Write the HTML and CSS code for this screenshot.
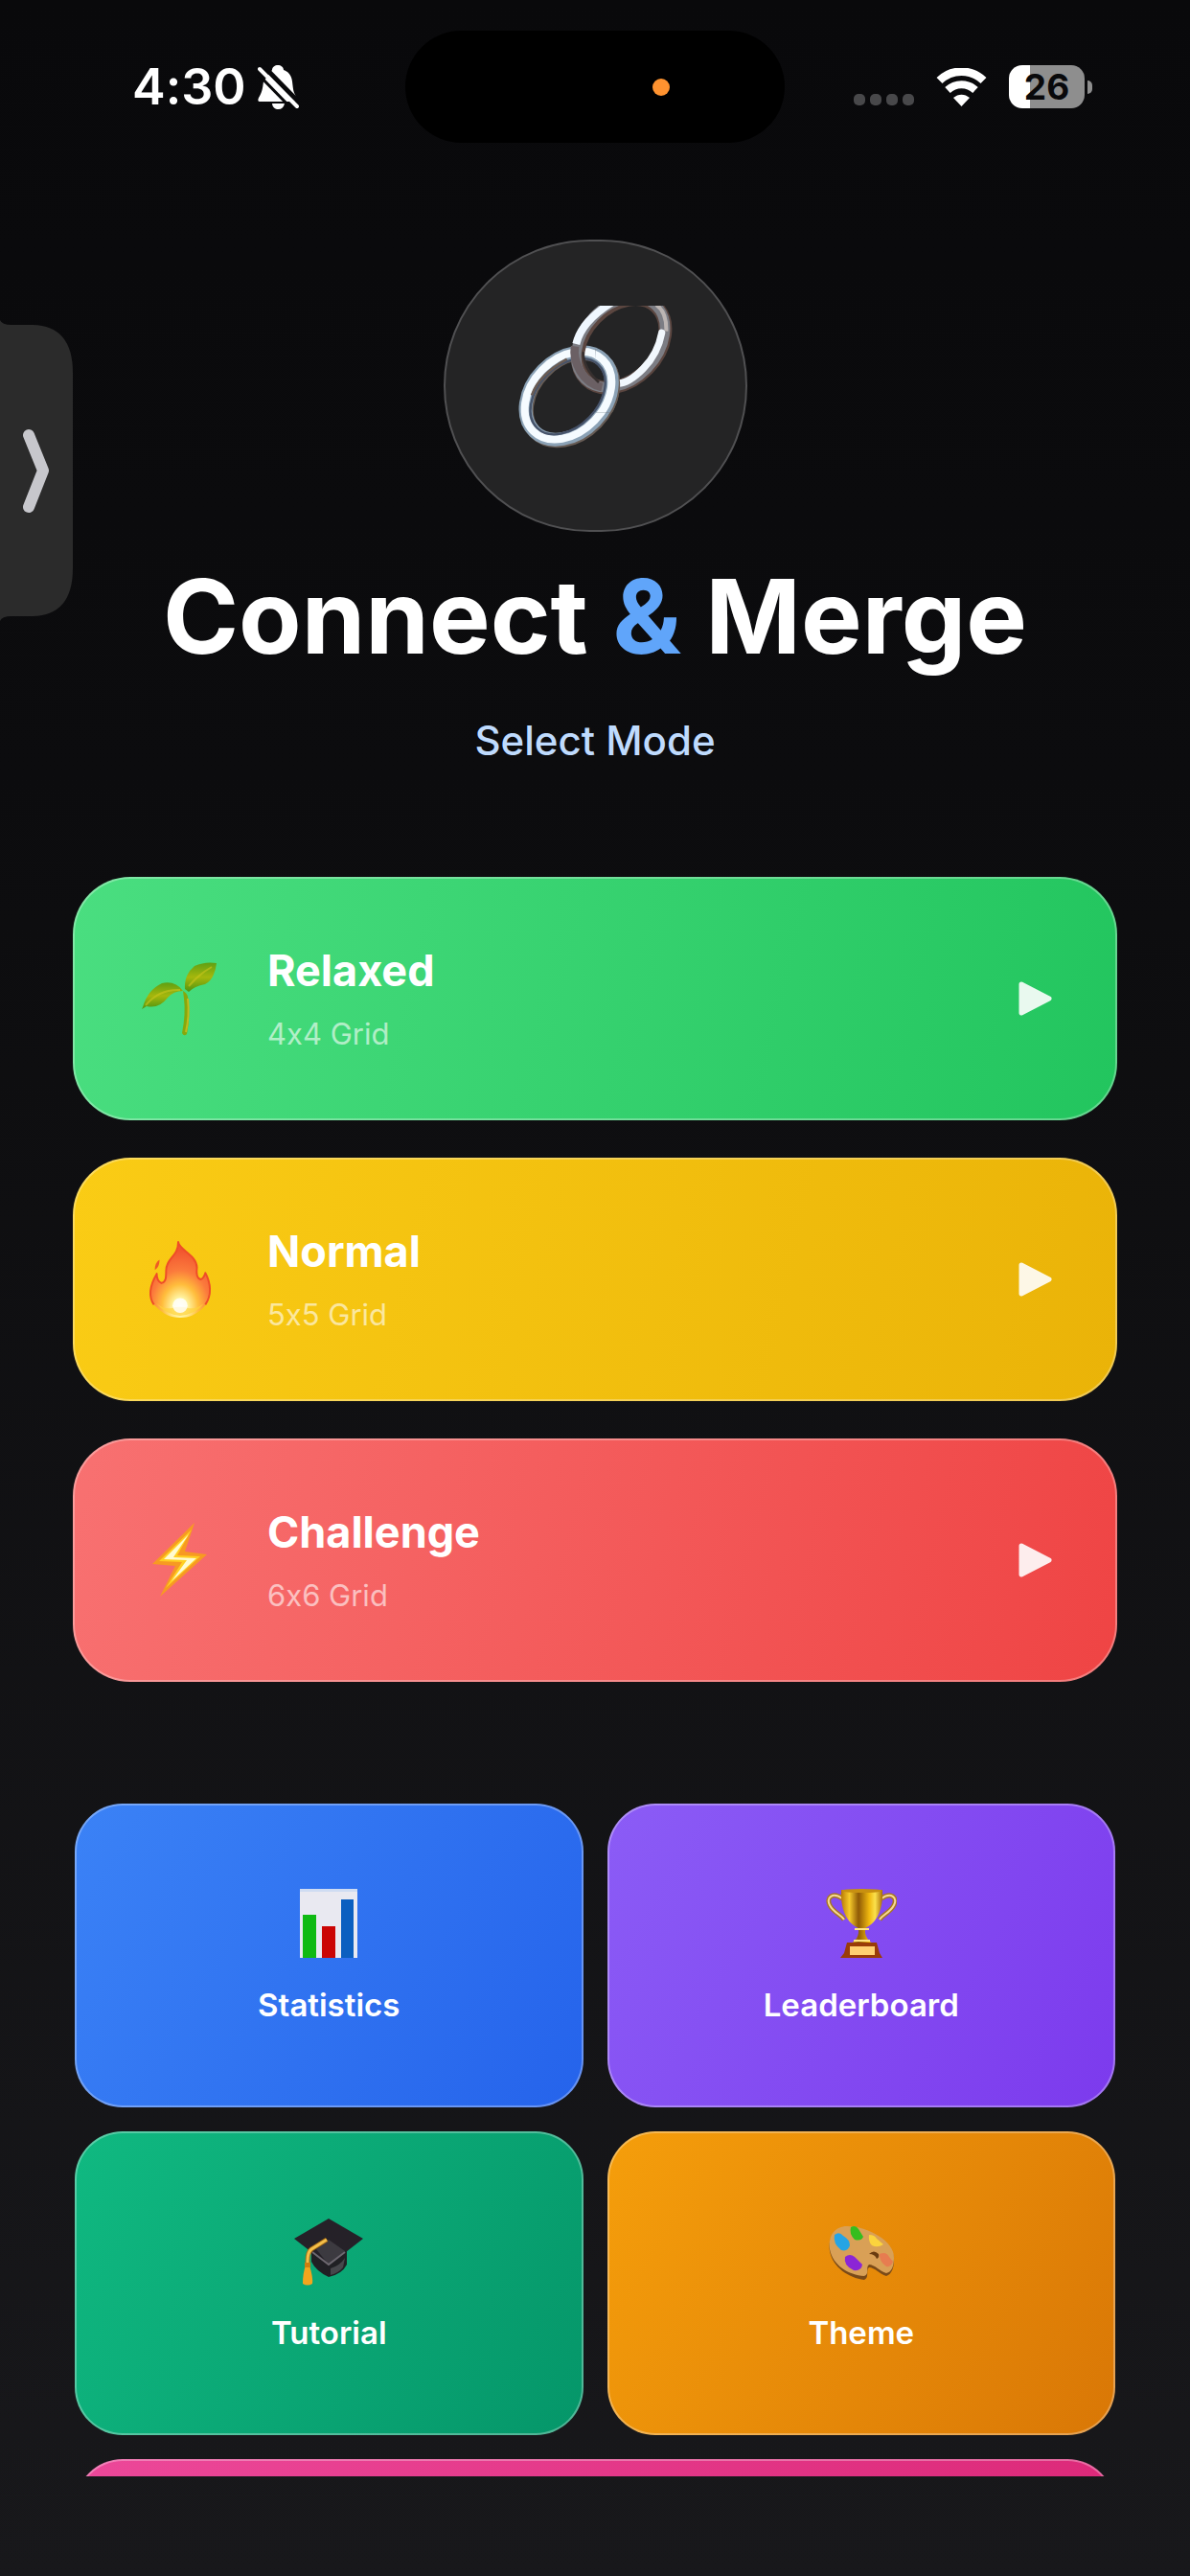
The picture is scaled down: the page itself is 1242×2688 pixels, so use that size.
FILE: index.html
```html
<!DOCTYPE html>
<html lang="en">
<head>
<meta charset="utf-8">
<meta name="viewport" content="width=device-width, initial-scale=1">
<title>Connect &amp; Merge</title>
<link rel="stylesheet" href="styles.css">
</head>
<body>
<div class="app">
  <div class="status">
    <div class="status-left">
      <span class="time">4:30</span>
      <svg class="bell" viewBox="0 0 43 46" aria-hidden="true">
        <path d="M21 0c-3 0-6 2-6 5L6 17c-1 9-2 12-5 17-1 2-1 4 1 4h38c2 0 2-2 1-4-4-5-4-9-5-17-1-7-4-10-9-12 0-3-3-5-6-5z" fill="#fff"/>
        <path d="M15 40h13c-1 4-3 6-6.500 6s-6-2-6.500-6z" fill="#fff"/>
        <path d="M5 0L46 42" stroke="#09090b" stroke-width="5" />
        <path d="M-4 0h12L-4 20z" fill="#09090b"/>
        <path d="M2 4L41 43" stroke="#fff" stroke-width="4" stroke-linecap="round"/>
        <path d="M0 9L36 46" stroke="#09090b" stroke-width="3"/>
      </svg>
    </div>
    <div class="island"><span class="mic-dot"></span></div>
    <div class="status-right">
      <span class="signal"><i></i><i></i><i></i><i></i></span>
      <svg class="wifi" viewBox="0 0 53 40" fill="none" stroke="#fff" aria-hidden="true">
        <path d="M3.500 13a33 33 0 0 1 46 0" stroke-width="8.500"/>
        <path d="M12 23a21 21 0 0 1 29 0" stroke-width="8"/>
        <path d="M26.500 40L18 31c5-4.500 12-4.500 17 0z" fill="#fff" stroke="none"/>
      </svg>
      <span class="battery"><span class="battery-level">26</span><span class="battery-cap"></span></span>
    </div>
  </div>

  <button class="drawer" aria-label="Open side panel">
    <svg viewBox="0 0 76 314" aria-hidden="true">
      <path d="M0 0q2 5 12 5h22q42 1 42 50v204q0 49-42 50H12q-10 0-12 5z" fill="#2b2b2b"/>
      <path d="M30 120l15 37-15 38" fill="none" stroke="#c7c7cc" stroke-width="12" stroke-linecap="round" stroke-linejoin="round"/>
    </svg>
  </button>

  <main class="content">
    <header class="hero">
      <div class="logo">
        <svg viewBox="300 265 486 447" aria-hidden="true">
          <defs>
            <clipPath id="over"><path d="M545 400L660 420V600H540V480z"/></clipPath>
            <g id="ring-low">
              <ellipse cx="465" cy="552" rx="155" ry="114" transform="rotate(-46 465 552)" stroke="#675c55" stroke-width="42"/>
              <ellipse cx="461" cy="547" rx="155" ry="114" transform="rotate(-46 461 547)" stroke="#8ba2b6" stroke-width="42"/>
              <ellipse cx="459" cy="546" rx="156" ry="114" transform="rotate(-46 459 546)" stroke="#f5fbff" stroke-width="24"/>
              <ellipse cx="458" cy="549" rx="138" ry="94" transform="rotate(-46 458 549)" stroke="#46536a" stroke-width="7"/>
            </g>
          </defs>
          <g fill="none">
            <use href="#ring-low"/>
            <path d="M345 545Q368 480 455 432" stroke="#6a5c54" stroke-width="8"/>
            <ellipse cx="626" cy="383" rx="158" ry="114" transform="rotate(-46 626 383)" stroke="#5b4640" stroke-width="42"/>
            <ellipse cx="623" cy="380" rx="160" ry="116" transform="rotate(-46 623 380)" stroke="#7c7d84" stroke-width="32"/>
            <path d="M484 385Q500 315 595 255" stroke="#eff7ff" stroke-width="24"/>
            <path d="M480 392Q474 430 497 470T565 520" stroke="#6b6064" stroke-width="26"/>
            <path d="M735 262Q768 285 766 345" stroke="#bcb5b3" stroke-width="12"/>
            <path d="M752 350Q740 415 694 462T615 508" stroke="#f1f7fd" stroke-width="22" stroke-linecap="round"/>
            <path d="M506 410Q505 460 555 505" stroke="#37302f" stroke-width="8"/>
            <g clip-path="url(#over)"><use href="#ring-low"/></g>
          </g>
        </svg>
      </div>
      <h1>Connect <span class="amp">&amp;</span> Merge</h1>
      <p class="subtitle">Select Mode</p>
    </header>

    <section class="modes" aria-label="Game modes">
      <button class="mode relaxed">
        <svg class="mode-icon" viewBox="0 0 80 80" aria-hidden="true">
          <defs><linearGradient id="leaf" x1="0" y1="0" x2="0" y2="1"><stop offset="0" stop-color="#5f9f12"/><stop offset=".5" stop-color="#a5b70c"/><stop offset="1" stop-color="#4e9410"/></linearGradient></defs>
          <path d="M44 32q4 2 5 6 3 20-1 39-3 3-5-1 4-20 2-36z" fill="#86a80c"/>
          <path d="M49 40q2 18-2 35" stroke="#c3b91a" stroke-width="2" fill="none"/>
          <path d="M2 49q5-18 20-25 14-3 22 8-10 0-16 7-9 12-22 9l-5 3z" fill="url(#leaf)"/>
          <path d="M46 30q-1-15 10-24 11-5 23-3-2 17-12 22-11 2-17 8z" fill="url(#leaf)"/>
          <path d="M5 47q14-17 36-16M50 27Q60 15 74 7" stroke="#c9c51c" stroke-width="2" fill="none" opacity=".6"/>
        </svg>
        <span class="mode-text"><span class="mode-title">Relaxed</span><span class="mode-grid">4x4 Grid</span></span>
        <svg class="play" viewBox="0 0 36 36" aria-hidden="true"><path d="M4 3l29 15L4 33z" fill="#fff" stroke="#fff" stroke-width="5" stroke-linejoin="round"/></svg>
      </button>
      <button class="mode normal">
        <svg class="mode-icon" viewBox="0 0 80 82" aria-hidden="true">
          <defs><radialGradient id="flame" cx=".5" cy=".86" r=".75"><stop offset="0" stop-color="#fffef0"/><stop offset=".17" stop-color="#fff3a0"/><stop offset=".4" stop-color="#ffbd3c"/><stop offset=".65" stop-color="#fb7a3c"/><stop offset="1" stop-color="#f2552f"/></radialGradient></defs>
          <path d="M39 1c1 9 19 13 20 27-1 8 0 12 4 13 3-1 4-3 5-7 7 12 8 27-3 38-8 7-14 10-24 10s-18-4-25-11C5 61 8 47 16 35c0 5 1 8 5 10 5-1 5-6 5-13 0-14 13-15 13-31z" fill="url(#flame)"/>
          <path d="M13 68C6 58 9 47 16 35c0 5 1 8 5 10 5-1 5-6 5-13 0-14 13-15 13-31 1 9 19 13 20 27-1 8 0 12 4 13 3-1 4-3 5-7 6 11 7 24 0 34" fill="none" stroke="#ee4d28" stroke-width="2" stroke-linejoin="round"/>
          <path d="M19 20q-5 3-5 11 5-3 5-11z" fill="#ee5b24"/>
          <path d="M15 66q10 12 26 14 17-2 26-14-8 7-16 6-10-3-20 0-8 1-16-6z" fill="#ffd33c" opacity=".7"/>
          <circle cx="41" cy="69" r="8" fill="#fff" opacity=".8"/>
        </svg>
        <span class="mode-text"><span class="mode-title">Normal</span><span class="mode-grid">5x5 Grid</span></span>
        <svg class="play" viewBox="0 0 36 36" aria-hidden="true"><path d="M4 3l29 15L4 33z" fill="#fff" stroke="#fff" stroke-width="5" stroke-linejoin="round"/></svg>
      </button>
      <button class="mode challenge">
        <svg class="mode-icon" viewBox="0 0 80 80" aria-hidden="true">
          <path d="M56 1L12 44l24 2-16 32 49-44-23-3z" fill="#f79a22"/>
          <path d="M53 8L19 41l24 1-17 27 36-33-24-1z" fill="#ffcf21"/>
          <path d="M50 13L24 39l24 1-16 22 26-24-24-1z" fill="#fffbd0"/>
        </svg>
        <span class="mode-text"><span class="mode-title">Challenge</span><span class="mode-grid">6x6 Grid</span></span>
        <svg class="play" viewBox="0 0 36 36" aria-hidden="true"><path d="M4 3l29 15L4 33z" fill="#fff" stroke="#fff" stroke-width="5" stroke-linejoin="round"/></svg>
      </button>
    </section>

    <nav class="tiles" aria-label="Menu">
      <button class="tile statistics">
        <svg class="tile-icon" viewBox="0 0 74 74" aria-hidden="true">
          <path d="M7 1h60v72H7z" fill="#e9e9f1"/><path d="M7 1h60v3H7z" fill="#cfdcf2"/>
          <path d="M10 28h14v45H10z" fill="#0fba13"/><path d="M30 40h14v33H30z" fill="#cb0505"/><path d="M50 12h13v61H50z" fill="#0b5fc0"/>
        </svg>
        <span>Statistics</span>
      </button>
      <button class="tile leaderboard">
        <svg class="tile-icon" viewBox="0 0 74 74" aria-hidden="true">
          <defs><linearGradient id="gold" x1="0" x2="1"><stop offset="0" stop-color="#b97a05"/><stop offset=".2" stop-color="#f6cb2a"/><stop offset=".42" stop-color="#8f5a06"/><stop offset=".68" stop-color="#f0b90f"/><stop offset=".82" stop-color="#fbe14c"/><stop offset="1" stop-color="#a86c06"/></linearGradient></defs>
          <g fill="none"><path d="M17 11C7 4 0 10 4 18s11 9 15 15M58 11c10-7 17-1 13 7s-11 9-15 15" stroke="#a77622" stroke-width="5"/><path d="M17 11C7 4 0 10 4 18s11 9 15 15M58 11c10-7 17-1 13 7s-11 9-15 15" stroke="#f6d994" stroke-width="2"/></g>
          <path d="M16 2h43c1 19-5 34-18 40v5q1 7 8 11H26q7-4 8-11v-5C21 36 15 21 16 2z" fill="url(#gold)"/>
          <ellipse cx="37.500" cy="3" rx="21" ry="2" fill="#c89010"/>
          <path d="M30 43h15M29 55h17" stroke="#ffe483" stroke-width="2"/>
          <path d="M22 57h31l3 11 3 5H15l4-5z" fill="#9a3c08"/><path d="M25 61h26v9H25z" fill="#ffd071"/>
        </svg>
        <span>Leaderboard</span>
      </button>
      <button class="tile tutorial">
        <svg class="tile-icon" viewBox="0 0 74 74" aria-hidden="true">
          <path d="M19 38v10q5 10 18 16 14-3 19-13V34z" fill="#202024"/>
          <path d="M39 55q10-3 15-11l-2 10q-5 6-13 8z" fill="#46474b"/>
          <path d="M37 3l36 21-36 28L1 24z" fill="#252128"/><path d="M24 35l13-10 17 12-17 14z" fill="#3c3a40"/>
          <path d="M20 38l17 13 17-13" fill="none" stroke="#6d6870" stroke-width="2"/>
          <path d="M35 25L19 35q-4 3-4 12v8" fill="none" stroke="#a66a12" stroke-width="5"/><path d="M35 25L19 35q-4 3-4 12v8" fill="none" stroke="#f4bf4a" stroke-width="3"/>
          <path d="M13 52h4q4 13 3 19-5 3-10 0 0-11 3-19z" fill="#f3a51e"/><path d="M12 49h6v5h-6z" fill="#cf7e10"/>
        </svg>
        <span>Tutorial</span>
      </button>
      <button class="tile theme">
        <svg class="tile-icon" viewBox="0 0 74 74" aria-hidden="true">
          <path d="M4 37C2 22 10 12 22 12c22 0 50 17 49 34 0 8-2 15-8 17-7-2-12-9-18-9-4 3 1 10-5 13C24 65 7 54 4 37z" fill="#7a4a18"/>
          <path d="M4 35C2 20 10 11 22 11c22 0 50 16 49 33 0 8-2 15-8 16-7-2-12-9-18-9-4 3 1 10-5 12C24 62 7 52 4 35z" fill="#d9a056"/>
          <path d="M45 40q5-5 10 0 1 4-2 5-2-5-8-5z" fill="#6a3c10"/>
          <path d="M26 12q5-3 8 2l5 8q-2 5-9 3-6-6-4-13z" fill="#35bd1e"/>
          <path d="M9 20q5-4 9 1 7 4 7 10-2 7-9 5Q7 29 9 20z" fill="#26a4e4"/>
          <path d="M45 20q6 0 8 4l7 6q-6 4-12 1-4-4-3-11z" fill="#fbd33d"/>
          <path d="M56 40q7-3 10 3l4 5q-2 6-7 5-8-6-7-13z" fill="#e77c50"/>
          <path d="M20 43q5-4 10 0l8 8q-1 7-9 6-11-5-9-14z" fill="#8b25d5"/>
        </svg>
        <span>Theme</span>
      </button>
      <button class="tile wide" aria-label="More"></button>
    </nav>
  </main>
</div>
</body>
</html>
```
FILE: styles.css
```css
* { box-sizing: border-box; }

body {
  margin: 0;
  background: #09090b;
  color: #fff;
  font-family: Inter, "Liberation Sans", sans-serif;
  /* keeps the "x" in "4x4" a letter */
  font-feature-settings: "calt" 0;
}

button {
  font: inherit;
  font-feature-settings: inherit;
  color: inherit;
  border: 0;
  padding: 0;
  cursor: pointer;
}

svg { display: block; flex: none; }

.app {
  position: relative;
  display: flex;
  flex-direction: column;
  height: 100vh;
  padding-bottom: 104px;
  background: linear-gradient(180deg, #09090b 0%, #0c0c0e 30%, #18181b 100%);
}

/* Status bar */
.status {
  display: grid;
  grid-template-columns: 1fr auto 1fr;
  align-items: center;
  flex: none;
  padding: 32px 102px 32px 138px;
}

.status-left,
.status-right {
  display: flex;
  align-items: center;
}

.status-left { gap: 12px; }

.time {
  font-size: 52px;
  line-height: 60px;
  font-weight: 600;
}

.bell { width: 43px; height: 46px; }

.island {
  display: flex;
  align-items: center;
  justify-content: flex-end;
  width: 396px;
  height: 117px;
  margin-left: -36px;
  padding-right: 120px;
  border-radius: 59px;
  background: #000;
}

.mic-dot {
  width: 18px;
  height: 18px;
  border-radius: 50%;
  background: #ff9330;
}

.status-right { justify-content: flex-end; gap: 23px; }

.signal { display: flex; gap: 5px; padding-top: 26px; }

.signal i {
  width: 12px;
  height: 12px;
  border-radius: 5px;
  background: #48484a;
}

.wifi { width: 53px; height: 40px; }

.battery { display: flex; align-items: center; gap: 3px; }

.battery-level {
  width: 79px;
  height: 45px;
  border-radius: 14px;
  background: linear-gradient(90deg, #fff 28%, #8e8e8e 28%);
  color: #09090b;
  font-size: 37px;
  line-height: 45px;
  font-weight: 700;
  text-align: center;
}

.battery-cap {
  width: 5px;
  height: 14px;
  border-radius: 0 5px 5px 0;
  background: #8e8e8e;
}

/* Pull-out tab over the left edge */
.drawer {
  position: absolute;
  top: 334px;
  left: 0;
  background: none;
}

.drawer svg { width: 76px; height: 314px; }

.content {
  flex: 1;
  min-height: 0;
  overflow: hidden;
  padding: 69px 76px 0;
}

.hero {
  display: flex;
  flex-direction: column;
  align-items: center;
  text-align: center;
}

.logo {
  display: flex;
  justify-content: center;
  width: 317px;
  height: 305px;
  padding-top: 67px;
  border: 2px solid #505052;
  border-radius: 153px;
  background: #242425;
}

.logo svg { width: 162px; height: 149px; }

h1 {
  margin: 24px 0 0;
  font-size: 107px;
  line-height: 128px;
  font-weight: 700;
}

.amp { color: #60a5fa; }

.subtitle {
  margin: 40px 0 0;
  color: #bfdbfe;
  font-size: 42px;
  line-height: 52px;
  font-weight: 500;
}

.modes {
  display: flex;
  flex-direction: column;
  gap: 39px;
  margin-top: 116px;
}

.mode {
  display: flex;
  align-items: center;
  height: 254px;
  padding: 0 66px 0 69px;
  border: 2px solid rgba(255, 255, 255, 0.3);
  border-radius: 60px;
  background-origin: border-box;
  text-align: left;
}

.relaxed { background-image: linear-gradient(103deg, #4ade80, #22c55e); }
.normal { background-image: linear-gradient(103deg, #facc15, #eab308); }
.challenge { background-image: linear-gradient(103deg, #f87171, #ef4444); }

.mode-icon { width: 80px; height: 80px; }

.mode-text {
  display: flex;
  flex: 1;
  flex-direction: column;
  gap: 18px;
  margin-left: 52px;
}

.mode-title {
  font-size: 45px;
  line-height: 56px;
  font-weight: 700;
}

.mode-grid {
  color: rgba(255, 255, 255, 0.6);
  font-size: 31px;
  line-height: 40px;
}

.play { width: 36px; height: 36px; opacity: 0.9; }

.tiles {
  display: grid;
  grid-template-columns: 1fr 1fr;
  gap: 25px;
  margin: 127px 2px 0;
}

.tile {
  display: flex;
  flex-direction: column;
  align-items: center;
  justify-content: center;
  gap: 28px;
  height: 317px;
  border: 2px solid rgba(255, 255, 255, 0.3);
  border-radius: 50px;
  background-origin: border-box;
  font-size: 33px;
  line-height: 40px;
  font-weight: 600;
}

.tile-icon { width: 74px; height: 74px; }

.statistics { background-image: linear-gradient(121deg, #3b82f6, #2563eb); }
.leaderboard { background-image: linear-gradient(121deg, #8b5cf6, #7c3aed); }
.tutorial { background-image: linear-gradient(121deg, #10b981, #059669); }
.theme { background-image: linear-gradient(121deg, #f59e0b, #d97706); }

.wide {
  grid-column: 1 / -1;
  background-image: linear-gradient(106deg, #ec4899, #db2777);
}
```
